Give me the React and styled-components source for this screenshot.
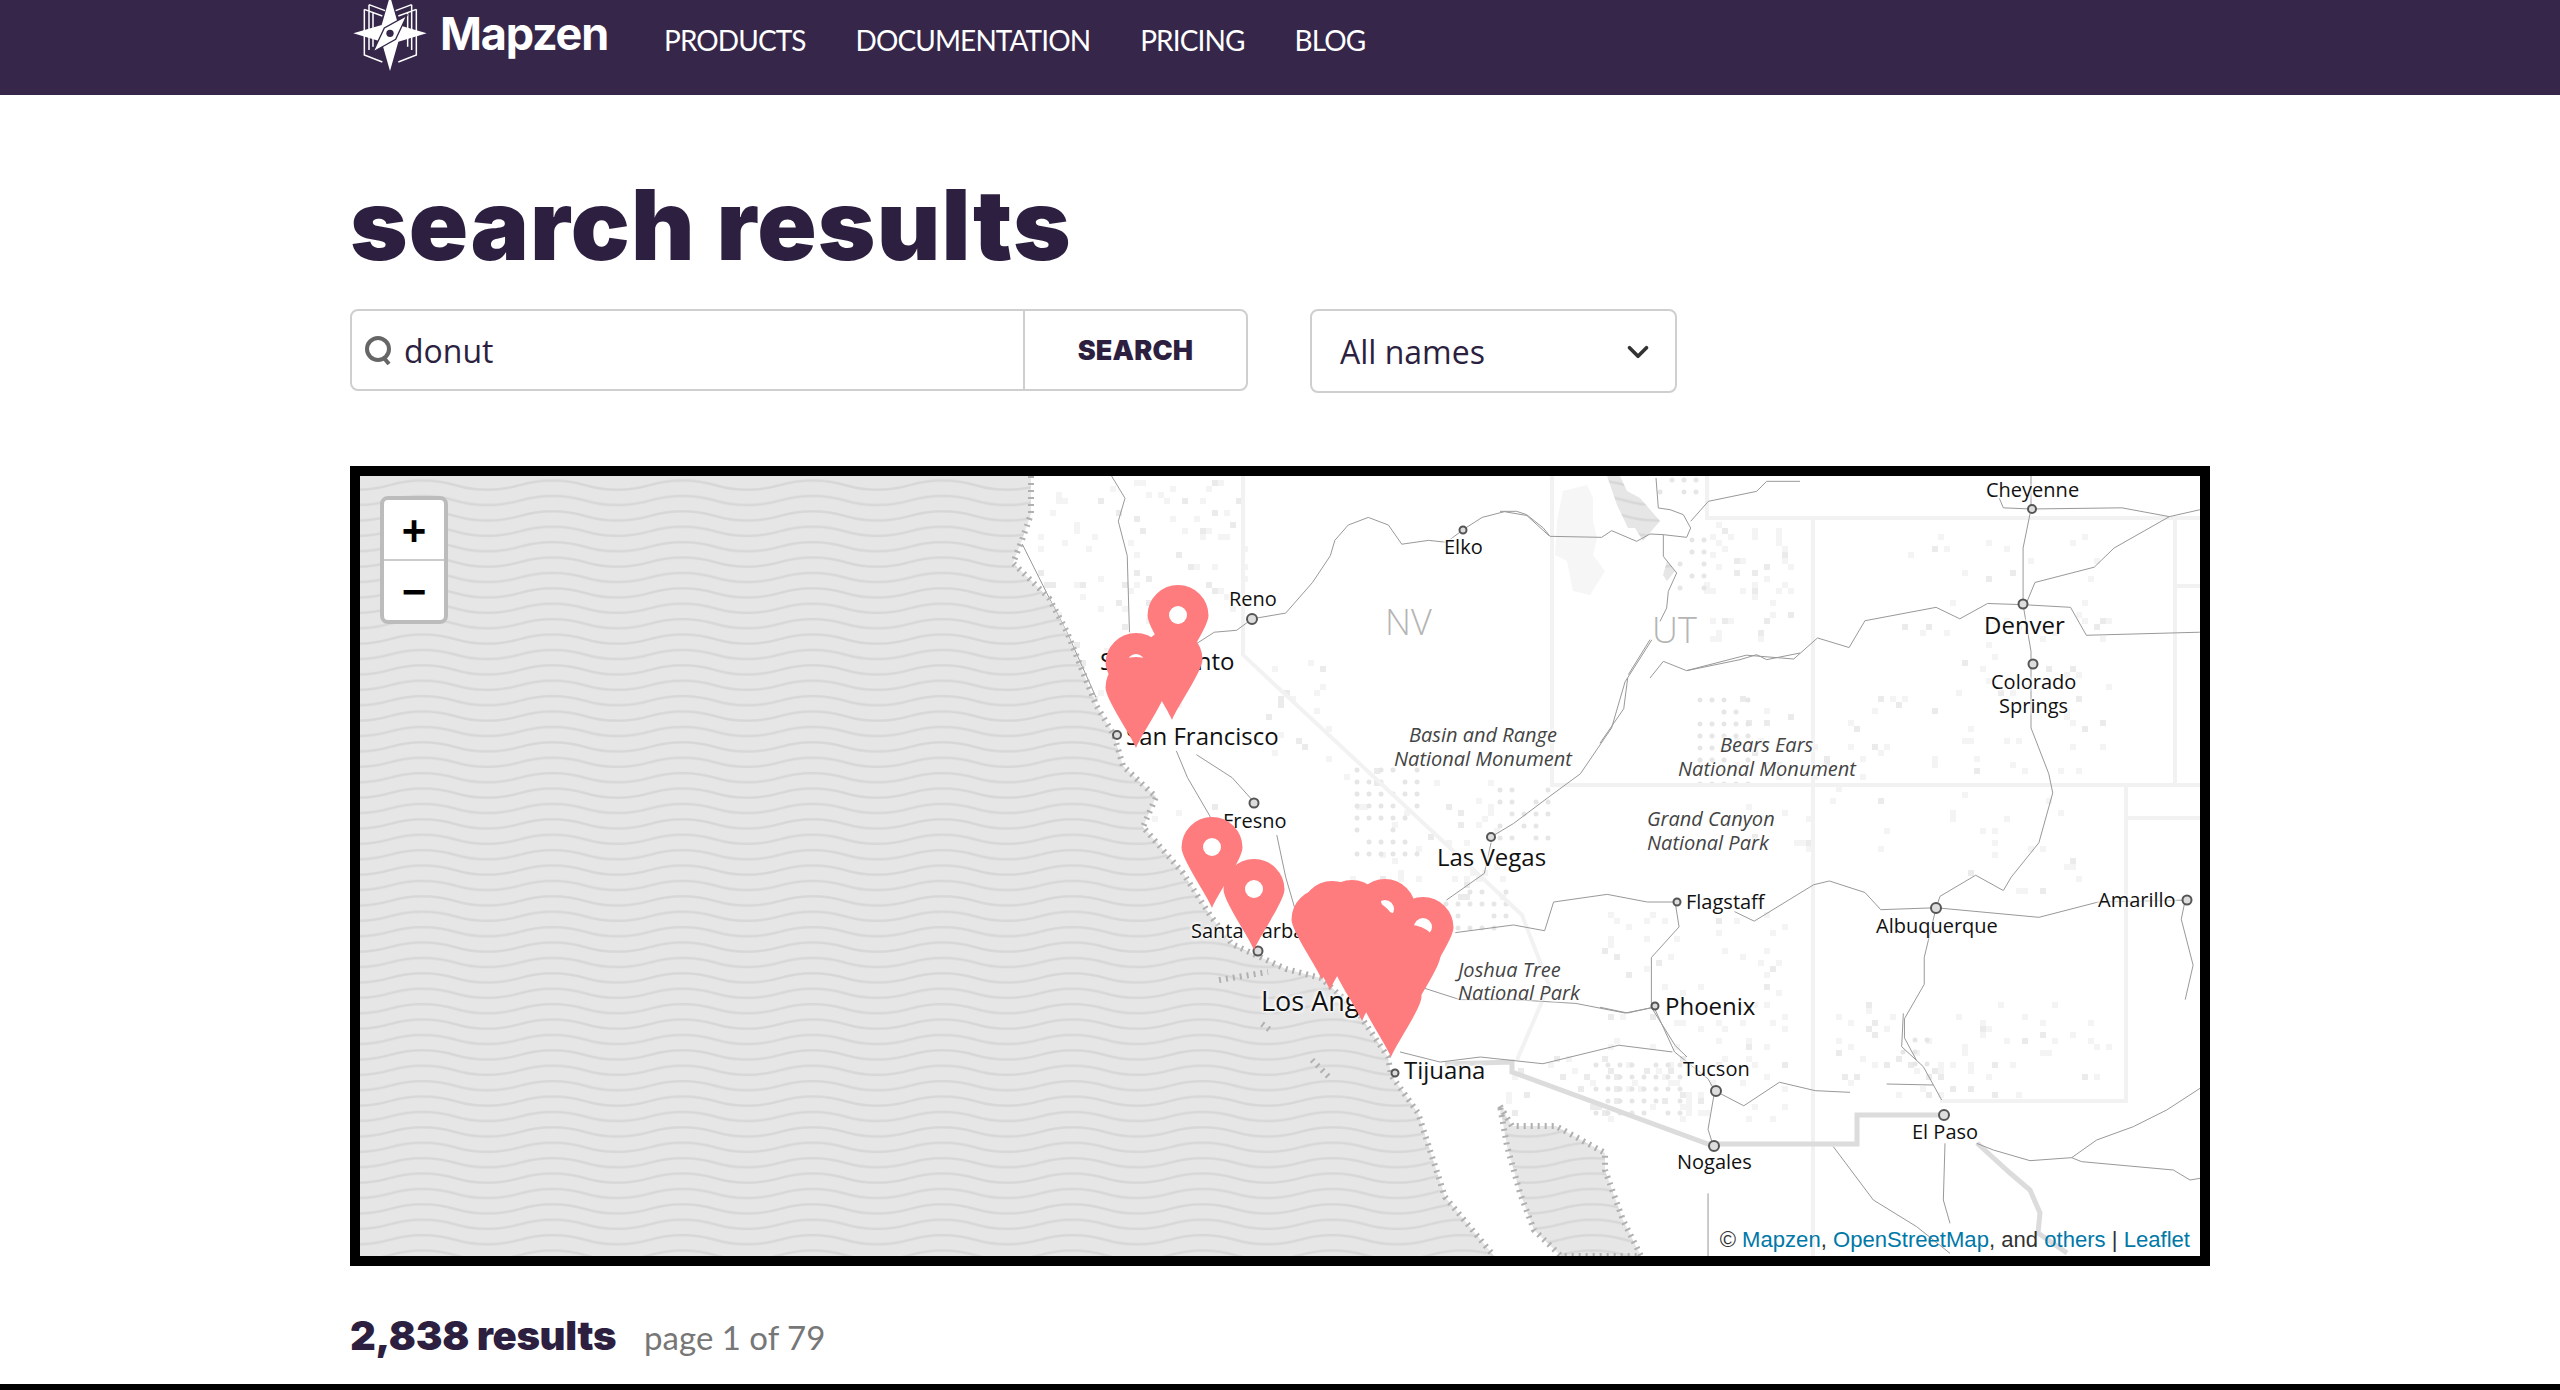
import React from 'react';
import styled, { createGlobalStyle } from 'styled-components';
import { ChevronDown } from 'lucide-react';

const GlobalStyle = createGlobalStyle`
  html, body { margin: 0; padding: 0; background: #fff; }
  body { font-family: "Open Sans", "Liberation Sans", sans-serif; overflow: hidden; }
  * { box-sizing: border-box; }
`;

const Page = styled.div`
  height: 1390px;
  display: flex;
  flex-direction: column;
  overflow: hidden;
`;

const Header = styled.header`
  height: 95px;
  flex: none;
  background: #36274a;
  padding-left: 353px;
  display: flex;
  align-items: flex-start;
`;

const LogoMark = styled.svg`
  width: 74px;
  height: 75px;
  margin-top: -4px;
  flex: none;
`;

const Brand = styled.a`
  margin: 6px 0 0 13px;
  width: 224px;
  font: 700 45px/56px "Inter", sans-serif;
  letter-spacing: -1.2px;
  color: #fff;
`;

const Nav = styled.nav`
  display: flex;
  gap: 50px;
  margin-top: 20px;
`;

const NavLink = styled.a`
  font: 400 28px/40px "Lato", sans-serif;
  letter-spacing: -0.9px;
  color: #fff;
  white-space: nowrap;
`;

const Main = styled.main`
  padding: 0 0 0 350px;
  width: 2210px;
`;

const Title = styled.h1`
  margin: 81px 0 0;
  height: 92px;
  font: 900 98px/1 "Inter", sans-serif;
  letter-spacing: 1.2px;
  color: #2c1f40;
`;

const SearchRow = styled.div`
  margin-top: 41px;
  display: flex;
  align-items: flex-start;
  gap: 62px;
`;

const SearchBox = styled.form`
  width: 898px;
  height: 82px;
  border: 2px solid #cfcfcf;
  border-radius: 8px;
  display: flex;
  align-items: stretch;
`;

const SearchField = styled.label`
  flex: 1;
  display: flex;
  align-items: center;
  gap: 12px;
  padding-left: 12px;
`;

const SearchInput = styled.input`
  flex: 1;
  min-width: 0;
  border: 0;
  outline: 0;
  padding: 2px 0 0;
  font: 400 32px/44px "Open Sans", sans-serif;
  color: #2c1f40;
`;

const SearchButton = styled.button`
  width: 223px;
  border: 0;
  border-left: 2px solid #cfcfcf;
  background: none;
  padding: 0;
  font: 900 27px/1 "Inter", sans-serif;
  letter-spacing: 0.2px;
  color: #2c1f40;
`;

const NameSelect = styled.div`
  width: 367px;
  height: 84px;
  border: 2px solid #cfcfcf;
  border-radius: 8px;
  padding: 2px 20px 0 28px;
  display: flex;
  align-items: center;
  justify-content: space-between;
  font: 400 32px/44px "Open Sans", sans-serif;
  color: #2c1f40;
`;

const MapFrame = styled.section`
  position: relative;
  margin-top: 73px;
  width: 1860px;
  height: 800px;
  border: 10px solid #000;
  overflow: hidden;
  background: #fff;
`;

const MapLayer = styled.svg`
  position: absolute;
  inset: 0;
  width: 1840px;
  height: 780px;
`;

const PlaceLabel = styled.span`
  position: absolute;
  line-height: 1;
  white-space: nowrap;
  font-family: "Open Sans", sans-serif;
  font-size: ${(p) => p.$size}px;
  font-style: ${(p) => (p.$park ? 'italic' : 'normal')};
  font-weight: ${(p) => (p.$state ? 300 : 400)};
  color: ${(p) => (p.$state ? '#b5b5b5' : p.$park ? '#444' : '#111')};
  text-shadow: ${(p) => (p.$state ? 'none' : '0 0 3px #fff, 0 0 3px #fff, 0 0 4px #fff, 0 0 5px #fff')};
`;

const ZoomControl = styled.div`
  position: absolute;
  left: 20px;
  top: 20px;
  width: 68px;
  height: 128px;
  border: 4px solid #bcbcbc;
  border-radius: 8px;
  background: #fff;
  display: flex;
  flex-direction: column;
`;

const ZoomButton = styled.a`
  flex: 1;
  display: flex;
  align-items: center;
  justify-content: center;
  padding-top: 3px;
  font: 700 42px/1 "Liberation Sans", sans-serif;
  color: #000;
  & + & { border-top: 2px solid #ccc; }
`;

const Attribution = styled.div`
  position: absolute;
  right: 10px;
  bottom: 1px;
  font: 400 22.1px/30px "Liberation Sans", sans-serif;
  color: #333;
  white-space: nowrap;
`;

const AttrLink = styled.a`
  color: #0078a8;
`;

const ResultLine = styled.div`
  margin-top: 45px;
  display: flex;
  align-items: baseline;
  gap: 28px;
`;

const ResultCount = styled.h2`
  margin: 0;
  font: 900 40px/49px "Inter", sans-serif;
  letter-spacing: -0.3px;
  color: #2c1f40;
`;

const PageInfo = styled.span`
  font: 400 33px/1.2 "Lato", sans-serif;
  color: #777;
`;

const BottomEdge = styled.div`
  margin-top: auto;
  height: 6px;
  flex: none;
  background: #000;
`;

// crops used to read the map: offset and scale of each traced group
const traceGroup = (x, y, sx, sy) => `translate(${x} ${y}) scale(${1 / sx} ${1 / sy})`;
const NORTH = traceGroup(1000, 460, 2.24, 2.613);
const EAST = traceGroup(1600, 460, 2.529, 2.613);
const SOUTH = traceGroup(1150, 850, 2.24, 2.971);
const FAR = traceGroup(1700, 1000, 3, 3);
const LAKE = traceGroup(1500, 478, 3, 3);

const roads = [
  [NORTH, 'M565 415 L640 400 L700 320 L740 250 L750 210 L780 170 L825 150 L870 170 L900 220 L960 210 L1000 215 L1040 180 L1080 150 L1130 135 L1180 145 L1230 198'],
  [NORTH, 'M565 415 L530 445 L480 450 L440 480'],
  [NORTH, 'M250 42 L280 100 L265 160 L285 250 L290 450'],
  [NORTH, 'M50 220 L110 360 L150 450 L215 620'],
  [NORTH, 'M395 760 L420 830 L470 930 L490 1000'],
  [NORTH, 'M440 770 L520 830 L570 895'],
  [NORTH, 'M620 980 L640 1090 L660 1170'],
  [NORTH, 'M1100 985 L1150 950 L1230 880 L1300 820 L1370 700 L1400 580 L1460 470'],
  [NORTH, 'M1000 1150 L1085 1080 L1100 1000'],
  [NORTH, 'M1020 1235 L1150 1215 L1220 1230 L1240 1155 L1360 1135 L1450 1155 L1515 1155'],
  [NORTH, 'M950 1380 L1030 1410 L1150 1410 L1290 1420 L1400 1445 L1465 1430'],
  [LAKE, 'M0 100 L50 100 L80 110 L130 150 L150 175 L305 178 L335 158 L410 190 L450 168 L490 170 L560 178 L572 150 L550 110 L510 95 L475 90 L468 0'],
  [LAKE, 'M572 130 L625 70 L770 40 L800 10 L900 10'],
  [LAKE, 'M490 170 L490 235 L530 285 L505 340 L500 390 L480 430'],
  [LAKE, 'M450 485 L385 590'],
  [LAKE, 'M450 600 L490 550 L560 578 L720 545 L770 530 L800 545 L900 525'],
  [EAST, 'M70 570 L60 650 L0 740'],
  [EAST, 'M220 550 L370 510 L490 520 L550 465 L630 490 L670 420 L850 385 L910 415 L980 375 L1070 378 L1190 385 L1230 458 L1517 450'],
  [EAST, 'M1090 42 L1090 128 L1070 230 L1070 378 L1090 500 L1090 700 L1135 820 L1145 870 L1110 1000 L1040 1090 L1020 1125 L950 1085 L860 1140 L850 1170'],
  [EAST, 'M1010 100 L1020 125 L1090 128 L1320 125 L1440 148 L1517 130'],
  [EAST, 'M1440 148 L1300 230 L1250 280 L1100 320 L1080 370'],
  [EAST, 'M190 1155 L200 1220 L130 1300 L130 1430 L190 1530 L220 1560'],
  [EAST, 'M340 1180 L390 1205 L540 1110 L580 1100 L670 1130 L710 1175 L850 1170 L1110 1195 L1260 1155 L1480 1150'],
  [EAST, 'M850 1170 L820 1300 L820 1370 L770 1460 L770 1510 L800 1568'],
  [EAST, 'M1480 1150 L1470 1200 L1500 1320 L1480 1410'],
  [EAST, 'M0 1430 L70 1445 L135 1430'],
  [SOUTH, 'M1130 470 L1175 600 L1250 680 L1265 715 L1250 830 L1262 880'],
  [SOUTH, 'M560 600 L650 630 L740 615 L880 635 L1050 580 L1170 600'],
  [SOUTH, 'M1265 715 L1330 760 L1410 690 L1490 715 L1568 720'],
  [SOUTH, 'M1250 1020 L1250 1215'],
  [FAR, 'M610 40 L605 140 L670 200 L725 300'],
  [FAR, 'M560 252 L700 255'],
  [FAR, 'M830 430 L880 450 L990 482 L1115 473 L1190 420 L1300 380 L1400 330 L1500 265'],
  [FAR, 'M1115 473 L1145 485 L1420 510 L1470 540 L1500 535'],
  [FAR, 'M400 440 L520 600 L650 680 L750 760'],
  [FAR, 'M735 430 L730 600 L750 670'],
];

const stateLines = 'M1243 476 V655 L1522 915 L1549 985 L1517 1060 M1552 476 V785 H2200 M1707 476 V518 H2200 M1813 518 V1256 M2175 518 V785 M2175 586 H2200 M2126 785 V1101 H1940 M2126 818 H2200';
const borderLine = 'M1445 1064 L1512 1062 L1512 1072 L1708 1144 H1857 V1115 H1943 M1977 1143 L2010 1173 L2030 1190 L2040 1213 L2038 1233 L2067 1253';
const coast = 'M1031 476 L1031 514 L1022 540 L1013 563 L1049 598 L1067 632 L1096 705 L1114 735 L1123 766 L1156 797 L1143 827 L1183 873 L1210 915 L1232 944 L1286 969 L1321 978 L1357 1011 L1388 1057 L1391 1075 L1418 1113 L1445 1197 L1494 1256';
const gulf = 'M1500 1106 L1512 1126 L1556 1126 L1605 1153 L1605 1170 L1623 1220 L1641 1256 L1561 1256 L1534 1230 L1520 1193 L1507 1146 Z';
const saltFlats = 'M1563 491 L1587 485 L1593 498 L1593 521 L1597 538 L1593 555 L1605 571 L1590 595 L1573 591 L1567 561 L1555 555 L1557 521Z';
const saltLake = 'M1607 476 L1620 476 L1627 491 L1640 498 L1660 521 L1643 541 L1635 528 L1628 528 L1617 505Z M1667 561 L1675 571 L1667 581 L1663 575Z';

const cities = [
  [1463, 530, 3.5], [1252, 619, 5], [2032, 509, 4], [2023, 604, 4.5], [2033, 664, 4.5],
  [1117, 735, 4], [1254, 803, 4.5], [1491, 837, 4], [1677, 902, 3.5], [1936, 908, 5],
  [2187, 900, 4.5], [1258, 951, 4.5], [1655, 1006, 3.5], [1395, 1073, 3.5], [1716, 1091, 5],
  [1714, 1146, 5], [1944, 1115, 5],
];

// [text, x, baseline, size, kind]
const places = [
  ['Cheyenne', 1986, 497, 20], ['Elko', 1444, 554, 20], ['Reno', 1229, 606, 20],
  ['Denver', 1984, 634, 24], ['Colorado', 1991, 689, 20], ['Springs', 1999, 713, 20],
  ['Sacramento', 1100, 670, 24], ['San Francisco', 1126, 745, 24],
  ['Basin and Range', 1409, 742, 20, 'park'], ['National Monument', 1394, 766, 20, 'park'],
  ['Bears Ears', 1720, 752, 20, 'park'], ['National Monument', 1678, 776, 20, 'park'],
  ['Grand Canyon', 1647, 826, 20, 'park'], ['National Park', 1647, 850, 20, 'park'],
  ['Fresno', 1223, 828, 20], ['Las Vegas', 1437, 866, 24], ['Flagstaff', 1686, 909, 20],
  ['Albuquerque', 1876, 933, 20], ['Amarillo', 2098, 907, 20], ['Santa Barbara', 1191, 938, 20],
  ['Joshua Tree', 1458, 977, 20, 'park'], ['National Park', 1458, 1000, 20, 'park'],
  ['Los Angeles', 1261, 1010, 27], ['Phoenix', 1665, 1015, 24], ['Tijuana', 1404, 1079, 24],
  ['Tucson', 1683, 1076, 20], ['Nogales', 1677, 1169, 20], ['El Paso', 1912, 1139, 20],
  ['NV', 1385, 635, 36, 'state'], ['UT', 1652, 643, 36, 'state'],
];

// pins in paint order: [centre x, top, has hole]
const pins = [
  [1178, 585, true], [1172, 629, false], [1136, 633, true], [1136, 657, false],
  [1212, 817, true], [1254, 859, true],
  [1332, 881, false], [1322, 889, false], [1330, 899, false], [1385, 879, true], [1352, 880, false],
  [1423, 897, true], [1366, 900, false], [1385, 912, false], [1362, 930, false], [1375, 925, false],
  [1410, 925, false], [1390, 950, false], [1391, 966, false],
];

let seed = 17;
const rnd = () => {
  seed = (seed * 16807) % 2147483647;
  return seed / 2147483647;
};

// loose patches of pale land cover: [x0, y0, x1, y1, count]
const patches = [
  [1040, 480, 1190, 700, 70], [1190, 480, 1240, 620, 25], [1340, 770, 1500, 900, 45],
  [1700, 520, 1790, 640, 50], [1600, 900, 1790, 1120, 90], [1720, 690, 1900, 850, 50],
  [1830, 1000, 2110, 1095, 70], [1900, 530, 2110, 780, 70], [1500, 1040, 1700, 1110, 40],
  [1250, 650, 1330, 760, 18], [1950, 790, 2080, 900, 20], [1130, 800, 1220, 860, 12],
];
const speckles = [];
patches.forEach(([x0, y0, x1, y1, count]) => {
  for (let i = 0; i < count; i++) {
    const x = x0 + rnd() * (x1 - x0);
    const y = y0 + rnd() * (y1 - y0);
    speckles.push([Math.round(x / 6) * 6, Math.round(y / 6) * 6, rnd() < 0.3 ? '#ebebeb' : '#f4f4f4']);
  }
});

const dotFields = [
  [1357, 770, 1424, 862], [1446, 892, 1513, 934], [1660, 480, 1708, 500], [1680, 540, 1712, 590],
  [1700, 700, 1760, 790], [1596, 1065, 1686, 1120], [1500, 790, 1550, 850], [1903, 1040, 1935, 1070],
];
const dots = [];
dotFields.forEach(([x0, y0, x1, y1]) => {
  for (let x = x0; x < x1; x += 12) {
    for (let y = y0; y < y1; y += 12) {
      if (rnd() < 0.75) dots.push([x, y]);
    }
  }
});

const PIN = 'M0 91 C-5 78 -30.5 42 -30.5 30.5 A30.5 30.5 0 0 1 30.5 30.5 C30.5 42 5 78 0 91Z';

const MapArt = () => (
  <MapLayer viewBox="360 476 1840 780">
    <defs>
      <pattern id="waves" width="130" height="15.4" patternUnits="userSpaceOnUse">
        <rect width="130" height="15.4" fill="#e6e6e6" />
        <path d="M0 7.7 C20 1.5 45 1.5 65 7.7 S110 13.9 130 7.7" fill="none" stroke="#d7d7d7" strokeWidth="2.4" />
      </pattern>
    </defs>
    <rect x="360" y="476" width="1840" height="780" fill="#fff" />
    {speckles.map(([x, y, c], i) => (
      <rect key={i} x={x} y={y} width="6" height="6" fill={c} />
    ))}
    {dots.map(([x, y], i) => (
      <circle key={i} cx={x} cy={y} r="2.5" fill="#e6e6e6" />
    ))}
    <path d={saltFlats} fill="#f6f6f6" />
    <path d={saltLake} fill="url(#waves)" />
    <path d={stateLines} fill="none" stroke="#f2f2f2" strokeWidth="4" />
    <path d={borderLine} fill="none" stroke="#dcdcdc" strokeWidth="5" />
    {roads.map(([tf, d], i) => (
      <path key={i} transform={tf} d={d} fill="none" stroke="#999" strokeWidth="1" vectorEffect="non-scaling-stroke" />
    ))}
    <path d={`${coast} L360 1256 L360 476 Z`} fill="url(#waves)" />
    <path d={gulf} fill="url(#waves)" />
    <path d={coast} fill="none" stroke="#b0b0b0" strokeWidth="6" strokeDasharray="2 5" />
    <path d={gulf} fill="none" stroke="#b0b0b0" strokeWidth="6" strokeDasharray="2 5" />
    <path d="M1219 980 L1268 972 M1262 1024 L1270 1030 M1312 1060 L1330 1078" fill="none" stroke="#b0b0b0" strokeWidth="6" strokeDasharray="2 5" />
    {cities.map(([x, y, r], i) => (
      <circle key={i} cx={x} cy={y} r={r} fill="#ddd" stroke="#555" strokeWidth="2" />
    ))}
  </MapLayer>
);

const PinLayer = () => (
  <MapLayer viewBox="360 476 1840 780">
    {pins.map(([x, top, hole], i) => (
      <g key={i} transform={`translate(${x} ${top})`}>
        <path d={PIN} fill="#fe7b7e" />
        {hole && <circle cy="30" r="9" fill="#fff" />}
      </g>
    ))}
  </MapLayer>
);

const Logo = () => (
  <LogoMark viewBox="25 -12 220 225">
    <g fill="none" stroke="#fff" strokeWidth="4.5">
      <path d="M58 28 L112 48 M58 28 V165 L112 186 M72 14 L120 32 M72 14 V150 M84 40 V140" />
      <path d="M214 28 L160 48 M214 28 V165 L160 186 M200 14 L152 32 M200 14 V150 M188 40 V140" />
    </g>
    <path d="M135 -12 L160 75 L245 100 L160 125 L135 213 L110 125 L25 100 L110 75Z" fill="#fff" />
    <path d="M186 46 L152 118 L84 156 L118 84Z" fill="#fff" stroke="#36274a" strokeWidth="4" />
    <circle cx="135" cy="100" r="11" fill="#36274a" />
  </LogoMark>
);

const SearchGlyph = () => (
  <svg width="28" height="30" viewBox="0 0 28 30" fill="none" stroke="#666" strokeWidth="4">
    <circle cx="14" cy="14" r="11" />
    <path d="M20 23 L25 29" />
  </svg>
);

const App = () => (
  <Page>
    <GlobalStyle />
    <Header>
      <Logo />
      <Brand>Mapzen</Brand>
      <Nav>
        {['PRODUCTS', 'DOCUMENTATION', 'PRICING', 'BLOG'].map((item) => (
          <NavLink key={item}>{item}</NavLink>
        ))}
      </Nav>
    </Header>
    <Main>
      <Title>search results</Title>
      <SearchRow>
        <SearchBox>
          <SearchField>
            <SearchGlyph />
            <SearchInput defaultValue="donut" />
          </SearchField>
          <SearchButton type="button">SEARCH</SearchButton>
        </SearchBox>
        <NameSelect>
          All names
          <ChevronDown size={34} strokeWidth={2.6} color="#333" />
        </NameSelect>
      </SearchRow>
      <MapFrame>
        <MapArt />
        {places.map(([text, x, base, size, kind], i) => (
          <PlaceLabel
            key={i}
            $size={size}
            $park={kind === 'park'}
            $state={kind === 'state'}
            style={{ left: x - 360, top: base - 476 - size * 0.86 }}
          >
            {text}
          </PlaceLabel>
        ))}
        <PinLayer />
        <ZoomControl>
          <ZoomButton>+</ZoomButton>
          <ZoomButton>−</ZoomButton>
        </ZoomControl>
        <Attribution>
          © <AttrLink>Mapzen</AttrLink>, <AttrLink>OpenStreetMap</AttrLink>, and <AttrLink>others</AttrLink> | <AttrLink>Leaflet</AttrLink>
        </Attribution>
      </MapFrame>
      <ResultLine>
        <ResultCount>2,838 results</ResultCount>
        <PageInfo>page 1 of 79</PageInfo>
      </ResultLine>
    </Main>
    <BottomEdge />
  </Page>
);

export default App;
